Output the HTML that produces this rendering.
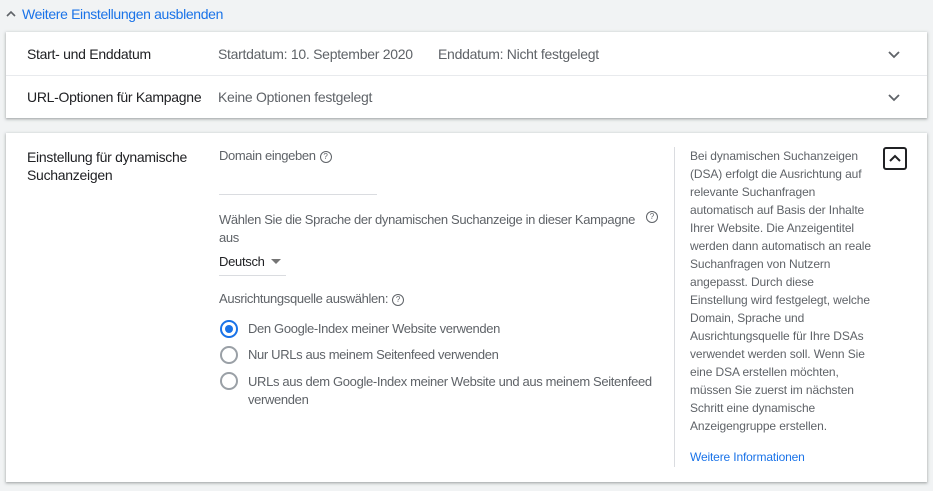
<!DOCTYPE html>
<html><head><meta charset="utf-8"><style>
body{margin:0;width:933px;height:491px;background:#f1f3f4;font-family:"Liberation Sans",Arial,sans-serif;position:relative;overflow:hidden;color:#3c4043}
.a{position:absolute;white-space:nowrap}
.card{position:absolute;left:6px;width:921px;background:#fff;box-shadow:0 1px 2px rgba(60,64,67,.3),0 1px 3px 1px rgba(60,64,67,.15)}
.t{font-size:14px;color:#202124;letter-spacing:-0.28px}
.g{font-size:14px;color:#5f6368;letter-spacing:-0.28px}
.s{font-size:13px;color:#5f6368;letter-spacing:-0.35px}
.q{display:inline-block;width:10px;height:10px;border:1px solid #5f6368;border-radius:50%;font-size:8px;line-height:10px;text-align:center;vertical-align:1px;margin-left:4px;color:#5f6368;letter-spacing:0}
.r{position:absolute;border:2px solid #9aa0a6;border-radius:50%;box-sizing:border-box;width:18px;height:18px}
</style></head><body>
<div class="a" style="left:6px;top:6px;font-size:14px;color:#1a73e8;letter-spacing:-0.35px"><svg width="10" height="8" style="vertical-align:1px;margin-right:6px"><path d="M1 6 L5 2 L9 6" stroke="#5f6368" stroke-width="1.6" fill="none"/></svg>Weitere Einstellungen ausblenden</div>
<div class="card" style="top:32px;height:86px">
<div style="position:absolute;left:0;right:0;top:43px;border-top:1px solid #e8eaed"></div>
</div>
<div class="a t" style="left:27px;top:46px">Start- und Enddatum</div>
<div class="a g" style="left:218px;top:46px">Startdatum: 10. September 2020</div>
<div class="a g" style="left:438px;top:46px">Enddatum: Nicht festgelegt</div>
<div class="a t" style="left:27px;top:89px">URL-Optionen für Kampagne</div>
<div class="a g" style="left:218px;top:89px">Keine Optionen festgelegt</div>
<svg class="a" style="left:888px;top:51px" width="12" height="8"><path d="M1 1 L6 6 L11 1" stroke="#5f6368" stroke-width="1.8" fill="none"/></svg>
<svg class="a" style="left:888px;top:94px" width="12" height="8"><path d="M1 1 L6 6 L11 1" stroke="#5f6368" stroke-width="1.8" fill="none"/></svg>

<div class="card" style="top:133px;height:349px"></div>
<div class="a t" style="left:27px;top:148px;line-height:18px">Einstellung für dynamische<br>Suchanzeigen</div>
<div class="a s" style="left:219px;top:148px">Domain eingeben<span class="q">?</span></div>
<div class="a" style="left:219px;top:194px;width:158px;border-top:1px solid #dadce0"></div>
<div class="a s" style="left:219px;top:211px;line-height:18px">Wählen Sie die Sprache der dynamischen Suchanzeige in dieser Kampagne<br>aus</div>
<span class="a q" style="left:646px;top:211px;margin:0">?</span>
<div class="a" style="left:219px;top:254px;font-size:13px;color:#202124;letter-spacing:-0.3px">Deutsch</div>
<div class="a" style="left:271px;top:259px;border:5px solid transparent;border-top:5px solid #757575;border-bottom:0"></div>
<div class="a" style="left:219px;top:275px;width:67px;border-top:1px solid #dadce0"></div>
<div class="a s" style="left:219px;top:291px">Ausrichtungsquelle auswählen:<span class="q">?</span></div>
<div class="r" style="left:220px;top:320px;border-color:#1a73e8"><div style="position:absolute;left:3px;top:3px;width:8px;height:8px;border-radius:50%;background:#1a73e8"></div></div>
<div class="a s" style="left:248px;top:321px">Den Google-Index meiner Website verwenden</div>
<div class="r" style="left:220px;top:346px"></div>
<div class="a s" style="left:248px;top:347px">Nur URLs aus meinem Seitenfeed verwenden</div>
<div class="r" style="left:220px;top:372px"></div>
<div class="a s" style="left:248px;top:373px;line-height:18px">URLs aus dem Google-Index meiner Website und aus meinem Seitenfeed<br>verwenden</div>

<div class="a" style="left:674px;top:147px;height:320px;border-left:1px solid #dadce0"></div>
<div class="a" style="left:690px;top:147px;font-size:12px;line-height:18px;color:#5f6368;letter-spacing:-0.1px">Bei dynamischen Suchanzeigen<br>(DSA) erfolgt die Ausrichtung auf<br>relevante Suchanfragen<br>automatisch auf Basis der Inhalte<br>Ihrer Website. Die Anzeigentitel<br>werden dann automatisch an reale<br>Suchanfragen von Nutzern<br>angepasst. Durch diese<br>Einstellung wird festgelegt, welche<br>Domain, Sprache und<br>Ausrichtungsquelle für Ihre DSAs<br>verwendet werden soll. Wenn Sie<br>eine DSA erstellen möchten,<br>müssen Sie zuerst im nächsten<br>Schritt eine dynamische<br>Anzeigengruppe erstellen.</div>
<div class="a" style="left:690px;top:450px;font-size:12px;color:#1a73e8;letter-spacing:-0.15px">Weitere Informationen</div>
<div class="a" style="left:883px;top:147px;width:20px;height:19px;border:2px solid #202124;border-radius:3px"><svg width="20" height="19"><path d="M5 12 L10 7 L15 12" stroke="#202124" stroke-width="2" fill="none"/></svg></div>
</body></html>
